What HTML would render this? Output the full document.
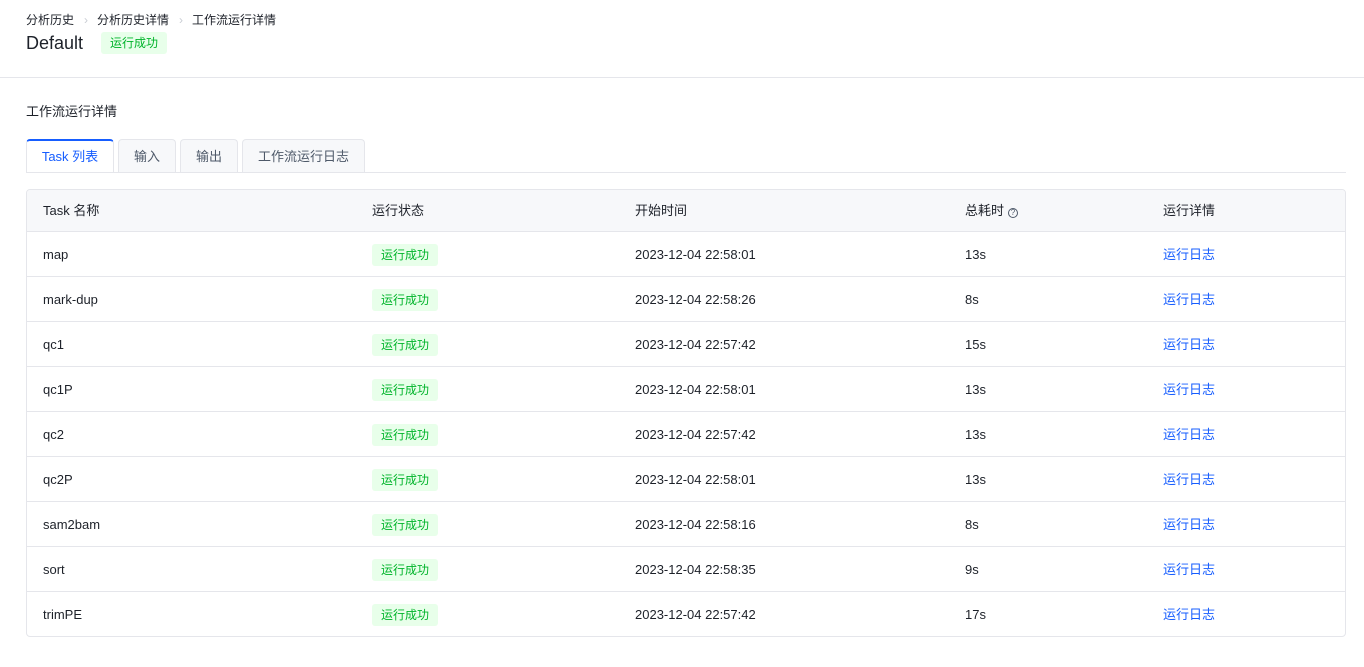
<!DOCTYPE html>
<html><head><meta charset="utf-8"><style>
*{box-sizing:border-box;margin:0;padding:0}
body{width:1364px;height:667px;background:#fff;font-family:"Liberation Sans","Noto Sans CJK SC",sans-serif;color:#1d2129;font-size:13px;position:relative;overflow:hidden}
.abs{position:absolute}
.bc{left:26px;top:11px;font-size:12px;color:#1d2129;white-space:nowrap}
.bc .sep{color:#c9cdd4;margin:0 9px 0 10px}
.title{left:26px;top:32px;font-size:18px;color:#1d2129}
.tag{display:inline-block;background:#e8ffea;color:#00b42a;font-size:12px;border-radius:3px;line-height:22px;height:22px;padding:0 9px;vertical-align:middle}
.hr{left:0;top:77px;width:1364px;height:1px;background:#e5e6eb}
.sec{left:26px;top:101px;font-size:13px}
.tab{position:absolute;top:139px;height:34px;border:1px solid #e5e6eb;border-bottom:none;background:#f7f8fa;border-radius:4px 4px 0 0;text-align:center;line-height:33px;font-size:13px;color:#4e5969}
.tab.act{background:#fff;color:#165dff;border-top:2px solid #165dff;line-height:31px;height:34px}
.tl{left:26px;top:172px;width:1320px;height:1px;background:#e5e6eb}
table{position:absolute;left:26px;top:189px;width:1320px;border-collapse:separate;border-spacing:0;border:1px solid #e5e6eb;border-radius:4px;overflow:hidden}
th{background:#f7f8fa;height:42px;font-weight:normal;text-align:left;font-size:13px;color:#1d2129;border-bottom:1px solid #e5e6eb;line-height:20px;padding-top:1px}
td{height:45px;border-bottom:1px solid #e5e6eb;font-size:13px;line-height:20px;vertical-align:middle;padding-top:1px}
tr:last-child td{border-bottom:none;height:44px}
th,td{padding-left:16px}
a{color:#165dff;text-decoration:none;display:inline-block;line-height:16px;vertical-align:middle}
.q{display:inline-block;width:10px;height:10px;border:1px solid #4e5969;border-radius:50%;font-size:8px;line-height:8px;text-align:center;vertical-align:0;margin-left:4px;color:#4e5969}
</style></head><body>
<div class="abs bc">分析历史<span class="sep">›</span>分析历史详情<span class="sep">›</span>工作流运行详情</div>
<div class="abs title">Default <span class="tag" style="margin-left:13px;vertical-align:2px">运行成功</span></div>
<div class="abs hr"></div>
<div class="abs sec">工作流运行详情</div>
<div class="tab act" style="left:26px;width:88px">Task 列表</div>
<div class="tab" style="left:118px;width:58px">输入</div>
<div class="tab" style="left:180px;width:58px">输出</div>
<div class="tab" style="left:242px;width:123px">工作流运行日志</div>
<div class="abs tl"></div>
<table>
<colgroup><col style="width:329px"><col style="width:263px"><col style="width:330px"><col style="width:198px"><col></colgroup>
<tr><th>Task 名称</th><th>运行状态</th><th>开始时间</th><th>总耗时<span class="q">?</span></th><th>运行详情</th></tr>
<tr><td>map</td><td><span class="tag">运行成功</span></td><td>2023-12-04 22:58:01</td><td>13s</td><td><a>运行日志</a></td></tr>
<tr><td>mark-dup</td><td><span class="tag">运行成功</span></td><td>2023-12-04 22:58:26</td><td>8s</td><td><a>运行日志</a></td></tr>
<tr><td>qc1</td><td><span class="tag">运行成功</span></td><td>2023-12-04 22:57:42</td><td>15s</td><td><a>运行日志</a></td></tr>
<tr><td>qc1P</td><td><span class="tag">运行成功</span></td><td>2023-12-04 22:58:01</td><td>13s</td><td><a>运行日志</a></td></tr>
<tr><td>qc2</td><td><span class="tag">运行成功</span></td><td>2023-12-04 22:57:42</td><td>13s</td><td><a>运行日志</a></td></tr>
<tr><td>qc2P</td><td><span class="tag">运行成功</span></td><td>2023-12-04 22:58:01</td><td>13s</td><td><a>运行日志</a></td></tr>
<tr><td>sam2bam</td><td><span class="tag">运行成功</span></td><td>2023-12-04 22:58:16</td><td>8s</td><td><a>运行日志</a></td></tr>
<tr><td>sort</td><td><span class="tag">运行成功</span></td><td>2023-12-04 22:58:35</td><td>9s</td><td><a>运行日志</a></td></tr>
<tr><td>trimPE</td><td><span class="tag">运行成功</span></td><td>2023-12-04 22:57:42</td><td>17s</td><td><a>运行日志</a></td></tr>
</table>
</body></html>
